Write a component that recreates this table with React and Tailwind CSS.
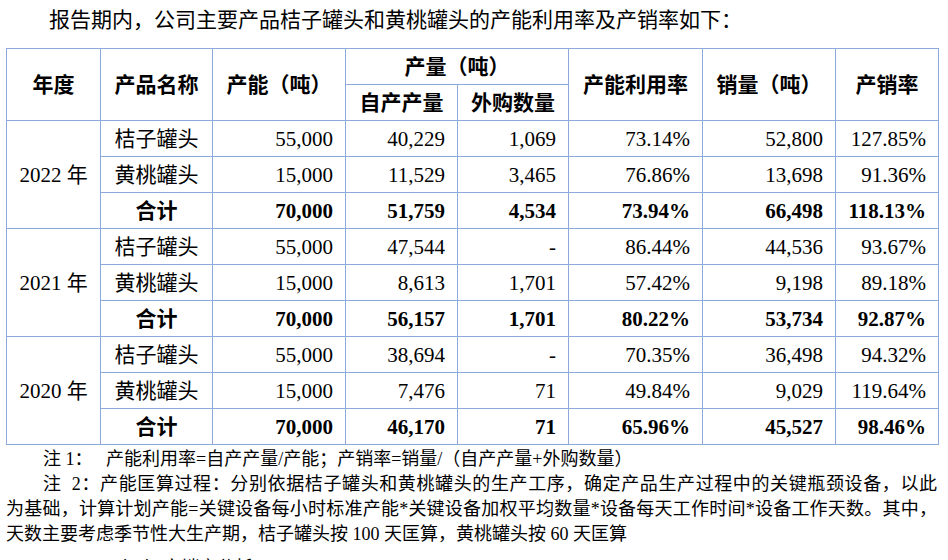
import React from "react";

const rows = [
  {
    year: "2022 年",
    items: [
      ["桔子罐头", "55,000", "40,229", "1,069", "73.14%", "52,800", "127.85%"],
      ["黄桃罐头", "15,000", "11,529", "3,465", "76.86%", "13,698", "91.36%"],
      ["合计", "70,000", "51,759", "4,534", "73.94%", "66,498", "118.13%"],
    ],
  },
  {
    year: "2021 年",
    items: [
      ["桔子罐头", "55,000", "47,544", "-", "86.44%", "44,536", "93.67%"],
      ["黄桃罐头", "15,000", "8,613", "1,701", "57.42%", "9,198", "89.18%"],
      ["合计", "70,000", "56,157", "1,701", "80.22%", "53,734", "92.87%"],
    ],
  },
  {
    year: "2020 年",
    items: [
      ["桔子罐头", "55,000", "38,694", "-", "70.35%", "36,498", "94.32%"],
      ["黄桃罐头", "15,000", "7,476", "71", "49.84%", "9,029", "119.64%"],
      ["合计", "70,000", "46,170", "71", "65.96%", "45,527", "98.46%"],
    ],
  },
];

const bd = "border border-[#8eaadb]";
const th = `${bd} text-center align-middle font-bold p-0`;
const td = `${bd} h-[36px] p-0 align-middle`;

export default function App() {
  return (
    <div
      className="w-[948px] h-[560px] overflow-hidden bg-white text-black pl-[6px] pr-[10px]"
      style={{ fontFamily: '"Liberation Serif", "Noto Sans CJK SC", serif' }}
    >
      <p className="text-[21px] leading-[21px] pt-[10px] h-[48px] indent-[43px] whitespace-nowrap">
        报告期内，公司主要产品桔子罐头和黄桃罐头的产能利用率及产销率如下：
      </p>
      <table className="border-collapse table-fixed w-[932px] text-[21px] leading-[24px]">
        <colgroup>
          <col className="w-[94px]" />
          <col className="w-[112px]" />
          <col className="w-[133px]" />
          <col className="w-[112px]" />
          <col className="w-[111px]" />
          <col className="w-[134px]" />
          <col className="w-[133px]" />
          <col className="w-[103px]" />
        </colgroup>
        <thead>
          <tr className="h-[36px]">
            <th rowSpan={2} className={th}>年度</th>
            <th rowSpan={2} className={th}>产品名称</th>
            <th rowSpan={2} className={th}>产能（吨）</th>
            <th colSpan={2} className={`${th} h-[36px]`}>产量（吨）</th>
            <th rowSpan={2} className={th}>产能利用率</th>
            <th rowSpan={2} className={th}>销量（吨）</th>
            <th rowSpan={2} className={th}>产销率</th>
          </tr>
          <tr className="h-[36px]">
            <th className={`${th} h-[36px]`}>自产产量</th>
            <th className={`${th} h-[36px]`}>外购数量</th>
          </tr>
        </thead>
        <tbody>
          {rows.map((g) =>
            g.items.map((r, i) => {
              const total = i === 2;
              return (
                <tr key={g.year + i} className="h-[36px]">
                  {i === 0 && (
                    <td rowSpan={3} className={`${td} text-center`}>
                      {g.year}
                    </td>
                  )}
                  <td className={`${td} text-center ${total ? "font-bold" : ""}`}>{r[0]}</td>
                  {r.slice(1).map((v, j) => (
                    <td
                      key={j}
                      className={`${td} text-right pr-[12px] ${total ? "font-bold" : ""}`}
                    >
                      {v}
                    </td>
                  ))}
                </tr>
              );
            })
          )}
        </tbody>
      </table>
      <div className="w-[931px] text-[18px] leading-[25px] pt-[2px]">
        <div className="whitespace-pre pl-[37px]">注 1：   产能利用率=自产产量/产能；产销率=销量/（自产产量+外购数量）</div>
        <div className="whitespace-pre pl-[37px] [text-align-last:justify] text-justify">注  2：产能匡算过程：分别依据桔子罐头和黄桃罐头的生产工序，确定产品生产过程中的关键瓶颈设备，以此</div>
        <div className="[text-align-last:justify] text-justify">为基础，计算计划产能=关键设备每小时标准产能*关键设备加权平均数量*设备每天工作时间*设备工作天数。其中，</div>
        <div>天数主要考虑季节性大生产期，桔子罐头按 100 天匡算，黄桃罐头按 60 天匡算</div>
        <div className="pt-[9px] pl-[103px]">（三）产销率分析</div>
      </div>
    </div>
  );
}
